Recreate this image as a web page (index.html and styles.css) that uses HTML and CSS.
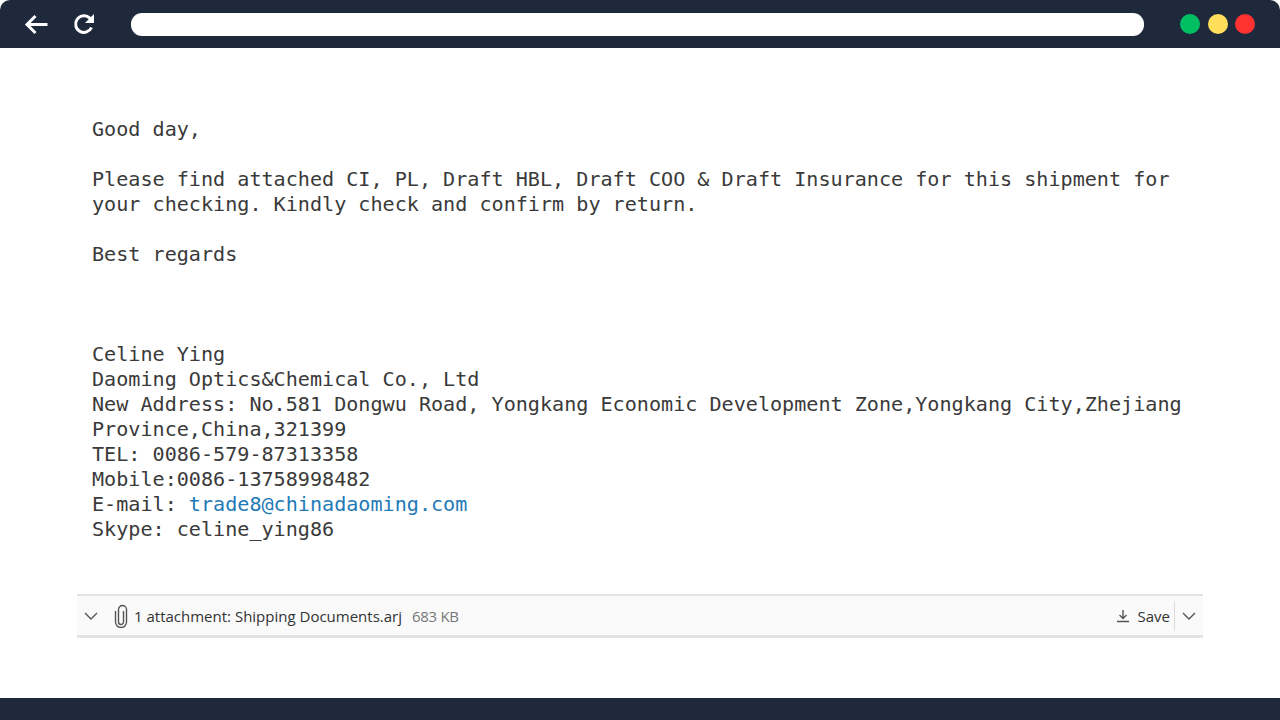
FILE: index.html
```html
<!DOCTYPE html>
<html lang="en">
<head>
<meta charset="utf-8">
<title>Email</title>
<link rel="stylesheet" href="styles.css">
</head>
<body>

<div class="window">

<div class="topbar">
    <svg class="nav_icon back_icon" width="24" height="24" viewBox="0 0 24 24"><path d="M23.500 12.500H3M11.500 4l-8.500 8.500 8.500 8.500"/></svg>
    <svg class="nav_icon reload_icon" width="22" height="22" viewBox="0 0 22 22"><path d="M18.500 14.500A8.300 8.300 0 1 1 16 4.500L18.500 7"/><path class="fill" d="M21 1v9h-9z"/></svg>
    <div class="address"></div>
    <div class="dots">
        <span class="dot green"></span>
        <span class="dot yellow"></span>
        <span class="dot red"></span>
    </div>
</div>

<div class="content">
<div class="mail_text">
    <p>Good day,</p>
    <p>Please find attached CI, PL, Draft HBL, Draft COO &amp; Draft Insurance for this shipment for<br>your checking. Kindly check and confirm by return.</p>
    <p class="sign_off">Best regards</p>
    <p>Celine Ying<br>Daoming Optics&amp;Chemical Co., Ltd<br>New Address: No.581 Dongwu Road, Yongkang Economic Development Zone,Yongkang City,Zhejiang<br>Province,China,321399<br>TEL: 0086-579-87313358<br>Mobile:0086-13758998482</p>
    <p class="tight">E-mail: <a href="#">trade8@chinadaoming.com</a></p>
    <p class="tight">Skype: celine_ying86</p>
</div>

<div class="attach_bar">
    <svg class="chevron" width="16" height="16" viewBox="0 0 16 16"><path d="M2 5l6 6 6-6"/></svg>
    <svg class="clip" width="16" height="24" viewBox="0 0 16 24"><path d="M10.500 7v11a2.500 2.500 0 0 1-5 0V5.500a4 4 0 0 1 8 0V18a5.500 5.500 0 0 1-11 0V7"/></svg>
    <span class="attach_name">1 attachment: Shipping Documents.arj</span>
    <span class="attach_size">683 KB</span>
    <span class="spacer"></span>
    <svg class="save_icon" width="14" height="14" viewBox="0 0 14 14"><path d="M7 1v8M3.500 6 7 9.500 10.500 6M1 12.500h12"/></svg>
    <span class="save_label">Save</span>
    <span class="divider"></span>
    <svg class="chevron" width="16" height="16" viewBox="0 0 16 16"><path d="M2 5l6 6 6-6"/></svg>
</div>
</div>

<div class="bottombar"></div>

</div>

</body>
</html>
```

FILE: styles.css
```css
*
{
box-sizing: border-box;
}

html, body
{
margin: 0;
padding: 0;
background-color: white;
}

.window
{
width: 1280px;
height: 720px;
display: flex;
flex-direction: column;
overflow: hidden;
}

.topbar
{
height: 48px;
flex-shrink: 0;
background-color: #1e293b;
border-radius: 10px 10px 0 0;
display: flex;
align-items: center;
padding: 0 25px 0 24px;
}

.bottombar
{
height: 22px;
flex-shrink: 0;
background-color: #1e293b;
}

.nav_icon path
{
fill: none;
stroke: white;
stroke-width: 3;
}

.nav_icon .fill
{
fill: white;
stroke: none;
}

.reload_icon
{
margin-left: 25px;
}

.address
{
width: 1013px;
height: 23px;
margin-left: 36px;
background-color: white;
border-radius: 11px;
}

.dots
{
display: flex;
gap: 7.500px;
margin-left: auto;
}

.dot
{
width: 20px;
height: 20px;
border-radius: 50%;
}

.green { background-color: #00bf63; }
.yellow { background-color: #ffde59; }
.red { background-color: #ff3131; }

.content
{
flex: 1;
padding: 69px 77px 0 77px;
}

.mail_text
{
height: 477px;
margin-left: 15px;
font-family: "DejaVu Sans Mono", monospace;
font-size: 20.120px;
line-height: 25px;
white-space: nowrap;
color: #3a3a3a;
}

.mail_text p
{
margin: 0 0 25px 0;
}

.mail_text .sign_off
{
margin-bottom: 75px;
}

.mail_text .tight
{
margin-top: -25px;
}

.mail_text a
{
color: #1f7ab8;
text-decoration: none;
}

.attach_bar
{
height: 44px;
background-color: #fafafa;
border-top: 2px solid #e3e3e3;
border-bottom: 3px solid #e3e3e3;
display: flex;
align-items: center;
padding: 0 6px 0 6px;
font-family: "Open Sans", sans-serif;
font-size: 15px;
color: #333333;
}

.attach_bar svg path
{
fill: none;
stroke: #555555;
stroke-width: 1.400;
}

.clip
{
margin-left: 14px;
}

.attach_name
{
margin-left: 5px;
}

.attach_size
{
margin-left: 10px;
color: #777777;
letter-spacing: -0.300px;
}

.spacer
{
flex: 1;
}

.save_label
{
margin-left: 8px;
}

.divider
{
width: 1px;
height: 30px;
margin: 0 6px 0 4px;
background-color: #dddddd;
}
```
